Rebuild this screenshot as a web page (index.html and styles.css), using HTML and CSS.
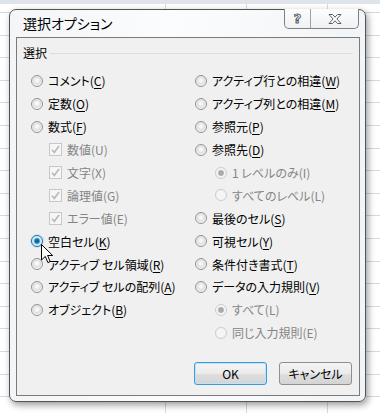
FILE: index.html
```html
<!DOCTYPE html>
<html lang="ja">
  <head>
    <meta charset="UTF-8" />
    <title>選択オプション</title>
    <link rel="stylesheet" href="styles.css">
  </head>
  <body>
    <div class="dialog">
      <div class="titlebar">
        <div class="title">選択オプション</div>
        <div class="caption-buttons">
          <div class="caption-btn help-btn"><span class="help-glyph">?</span></div>
          <div class="caption-btn close-btn">
            <svg width="14" height="10" viewBox="0 0 14 10">
              <polygon points="1,0.5 4.5,0.5 7,3.2 9.5,0.5 13,0.5 8.9,5 13,9.5 9.5,9.5 7,6.8 4.5,9.5 1,9.5 5.1,5" fill="#fdfdfd" stroke="#5c6066" stroke-width="1"/>
            </svg>
          </div>
        </div>
      </div>

      <div class="client">
        <div class="group-header">
          <span class="group-label">選択</span>
          <span class="group-line"></span>
        </div>

        <div class="options">
          <div class="column">
            <div class="option"><span class="radio"></span><span>コメント(<u>C</u>)</span></div>
            <div class="option"><span class="radio"></span><span>定数(<u>O</u>)</span></div>
            <div class="option"><span class="radio"></span><span>数式(<u>F</u>)</span></div>
            <div class="option sub-check disabled"><span class="checkbox"><svg width="11" height="11" viewBox="0 0 11 11"><path d="M2 5.8 L4.3 8.4 L9 2" fill="none" stroke="#b9b9b9" stroke-width="1.7"/></svg></span><span>数値(U)</span></div>
            <div class="option sub-check disabled"><span class="checkbox"><svg width="11" height="11" viewBox="0 0 11 11"><path d="M2 5.8 L4.3 8.4 L9 2" fill="none" stroke="#b9b9b9" stroke-width="1.7"/></svg></span><span>文字(X)</span></div>
            <div class="option sub-check disabled"><span class="checkbox"><svg width="11" height="11" viewBox="0 0 11 11"><path d="M2 5.8 L4.3 8.4 L9 2" fill="none" stroke="#b9b9b9" stroke-width="1.7"/></svg></span><span>論理値(G)</span></div>
            <div class="option sub-check disabled"><span class="checkbox"><svg width="11" height="11" viewBox="0 0 11 11"><path d="M2 5.8 L4.3 8.4 L9 2" fill="none" stroke="#b9b9b9" stroke-width="1.7"/></svg></span><span>エラー値(E)</span></div>
            <div class="option selected">
              <span class="radio checked"></span><span>空白セル(<u>K</u>)</span>
              <svg class="cursor" width="13" height="20" viewBox="0 0 13 20">
                <path d="M0.5 0.5 L0.5 16 L4.3 12.4 L6.9 18.6 L9.2 17.6 L6.6 11.5 L11.6 11.5 Z" fill="#fff" stroke="#000" stroke-width="1"/>
              </svg>
            </div>
            <div class="option"><span class="radio"></span><span>アクティブ セル領域(<u>R</u>)</span></div>
            <div class="option"><span class="radio"></span><span>アクティブ セルの配列(<u>A</u>)</span></div>
            <div class="option"><span class="radio"></span><span>オブジェクト(<u>B</u>)</span></div>
          </div>

          <div class="column">
            <div class="option"><span class="radio"></span><span>アクティブ行との相違(<u>W</u>)</span></div>
            <div class="option"><span class="radio"></span><span>アクティブ列との相違(<u>M</u>)</span></div>
            <div class="option"><span class="radio"></span><span>参照元(<u>P</u>)</span></div>
            <div class="option"><span class="radio"></span><span>参照先(<u>D</u>)</span></div>
            <div class="option sub-radio disabled"><span class="radio checked"></span><span>1 レベルのみ(I)</span></div>
            <div class="option sub-radio disabled"><span class="radio"></span><span>すべてのレベル(L)</span></div>
            <div class="option"><span class="radio"></span><span>最後のセル(<u>S</u>)</span></div>
            <div class="option"><span class="radio"></span><span>可視セル(<u>Y</u>)</span></div>
            <div class="option"><span class="radio"></span><span>条件付き書式(<u>T</u>)</span></div>
            <div class="option"><span class="radio"></span><span>データの入力規則(<u>V</u>)</span></div>
            <div class="option sub-radio disabled"><span class="radio checked"></span><span>すべて(L)</span></div>
            <div class="option sub-radio disabled"><span class="radio"></span><span>同じ入力規則(E)</span></div>
          </div>
        </div>

        <div class="actions">
          <button class="btn btn-default">OK</button>
          <button class="btn">キャンセル</button>
        </div>
      </div>
    </div>
  </body>
</html>
```

FILE: styles.css
```css
body {
  margin: 0;
  padding: 9px 0 0 9px;
  width: 380px;
  height: 413px;
  box-sizing: border-box;
  overflow: hidden;
  font-family: "Noto Sans CJK JP", "Noto Sans", sans-serif;
  font-size: 12px;
  font-feature-settings: "palt";
  color: #000;
  background-color: #fff;
  background-image:
    linear-gradient(#dfe4ea, #dfe4ea),
    linear-gradient(to right, transparent 165px, #d6d8da 165px 166px, transparent 166px 246px, #d6d8da 246px 247px, transparent 247px 327px, #d6d8da 327px 328px, transparent 328px),
    repeating-linear-gradient(to bottom, transparent 0 12px, #d6d8da 12px 13px, transparent 13px 22.6px);
  background-size: 100% 4px, 100% 100%, 100% 100%;
  background-repeat: no-repeat;
}

.dialog {
  width: 357px;
  height: 393px;
  box-sizing: border-box;
  border: 1px solid #50555b;
  border-radius: 7px;
  background: linear-gradient(to right, #f3f5f7, #fbfcfd 45%, #f2f5f7);
  box-shadow: 2px 3px 7px rgba(0, 0, 0, 0.4);
  padding: 0 5px 5px 6px;
  display: flex;
  flex-direction: column;
}

.titlebar {
  height: 27px;
  display: flex;
  justify-content: space-between;
  flex: none;
}

.title {
  padding-left: 7px;
  font-size: 14px;
  line-height: 27px;
}

.caption-buttons {
  display: flex;
  height: 19px;
  margin-top: -1px;
  margin-right: 1px;
  border: 1px solid #7c8189;
  border-top: none;
  border-radius: 0 0 5px 5px;
  overflow: hidden;
  background: linear-gradient(#fdfdfd, #eff1f3);
}

.caption-btn {
  display: flex;
  align-items: center;
  justify-content: center;
}

.help-btn {
  width: 25px;
  border-right: 1px solid #9da2a8;
}

.close-btn {
  width: 47px;
}

.help-glyph {
  font-family: "DejaVu Sans", sans-serif;
  font-size: 13px;
  font-weight: bold;
  line-height: 13px;
  color: #fdfdfd;
  -webkit-text-stroke: 1px #5c6066;
}

.client {
  flex: 1;
  border: 1px solid #7a7a7a;
  background: #f0f0f0;
  display: flex;
  flex-direction: column;
  padding: 8px 6px 10px 6px;
}

.group-header {
  display: flex;
  align-items: center;
  gap: 3px;
  height: 14px;
}

.group-label {
  line-height: 14px;
}

.group-line {
  flex: 1;
  height: 1px;
  background: #d5dfe5;
}

.options {
  display: grid;
  grid-template-columns: 164px 1fr;
  margin-top: 9.5px;
  padding-left: 8px;
}

.option {
  display: flex;
  align-items: center;
  gap: 5px;
  height: 22.9px;
  white-space: nowrap;
}

.option u {
  text-decoration-thickness: 1px;
  text-underline-offset: 2px;
}

.option.disabled {
  color: #858585;
}

.sub-check {
  padding-left: 18px;
}

.sub-radio {
  padding-left: 20px;
}

.selected {
  position: relative;
}

.cursor {
  position: absolute;
  left: 10px;
  top: 14px;
}

.radio {
  flex: none;
  width: 12px;
  height: 12px;
  box-sizing: border-box;
  border-radius: 50%;
  border: 1px solid #939393;
  background: radial-gradient(circle at 50% 45%, #f7f7f7 0 1.5px, #dedede 3.5px, #f9f9f9 5.5px);
}

.radio.checked {
  border-color: #2e6a98;
  background: radial-gradient(circle, #1a5f97 0 1.5px, #46b4ec 2.8px, #cfe9f8 3.6px, #eef8fe 5.5px);
  box-shadow: 0 0 2px #6ec0f2;
}

.disabled .radio {
  border-color: #cbcbcb;
  background: #f5f5f5;
  box-shadow: none;
}

.disabled .radio.checked {
  background: radial-gradient(circle, #a9a9a9 0 2.2px, #c9c9c9 2.9px, #f5f5f5 3.6px);
}

.checkbox {
  flex: none;
  width: 13px;
  height: 13px;
  box-sizing: border-box;
  border: 1px solid #c7c7c7;
  background: #f6f6f6;
  display: flex;
  align-items: center;
  justify-content: center;
}

.actions {
  margin-top: auto;
  display: flex;
  justify-content: flex-end;
  gap: 12px;
  padding-right: 1px;
}

.btn {
  width: 73px;
  height: 23px;
  border: 1px solid #8e8f8f;
  border-radius: 3px;
  background: linear-gradient(#f4f4f4 0, #ebebeb 50%, #dedede 51%, #d4d4d4 100%);
  font-family: inherit;
  font-size: 12px;
  font-feature-settings: "palt";
  color: #000;
  padding: 0;
}

.btn-default {
  border-color: #3c9ad6;
  box-shadow: inset 0 0 0 1px #bfe3f8;
}
```
